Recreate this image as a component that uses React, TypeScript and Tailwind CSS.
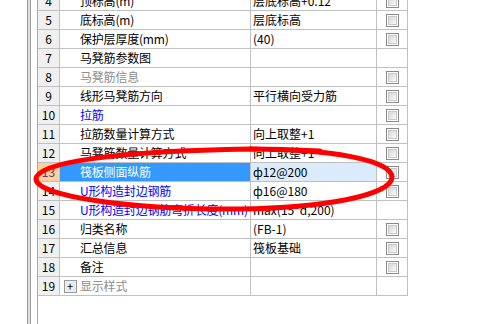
import React from 'react'

type Row = {
  no: number
  name: string
  value?: string
  check?: boolean
  tone?: 'normal' | 'blue' | 'gray'
  selected?: boolean
  expander?: boolean
}

const rows: Row[] = [
  { no: 4, name: '顶标高(m)', value: '层底标高+0.12', check: true },
  { no: 5, name: '底标高(m)', value: '层底标高', check: true },
  { no: 6, name: '保护层厚度(mm)', value: '(40)', check: true },
  { no: 7, name: '马凳筋参数图' },
  { no: 8, name: '马凳筋信息', check: true, tone: 'gray' },
  { no: 9, name: '线形马凳筋方向', value: '平行横向受力筋', check: true },
  { no: 10, name: '拉筋', check: true, tone: 'blue' },
  { no: 11, name: '拉筋数量计算方式', value: '向上取整+1', check: true },
  { no: 12, name: '马凳筋数量计算方式', value: '向上取整+1', check: true },
  { no: 13, name: '筏板侧面纵筋', value: 'ф12@200', check: true, tone: 'blue', selected: true },
  { no: 14, name: 'U形构造封边钢筋', value: 'ф16@180', check: true, tone: 'blue' },
  { no: 15, name: 'U形构造封边钢筋弯折长度(mm)', value: 'max(15*d,200)', tone: 'blue' },
  { no: 16, name: '归类名称', value: '(FB-1)', check: true },
  { no: 17, name: '汇总信息', value: '筏板基础', check: true },
  { no: 18, name: '备注', check: true },
  { no: 19, name: '显示样式', tone: 'gray', expander: true },
]

const font = { fontFamily: '"Noto Sans CJK SC", "Liberation Sans", sans-serif' }

const CheckBox = () => (
  <div className="h-[13px] w-[13px] border border-[#8a8a8a] bg-white p-px">
    <div className="h-full w-full border border-[#c8c8c8] bg-gradient-to-br from-[#d6d6dc] to-[#fbfbfb]" />
  </div>
)

const GridRow = ({ row }: { row: Row }) => {
  const nameColor = row.selected
    ? 'text-white'
    : row.tone === 'blue'
      ? 'text-[#0000ff]'
      : row.tone === 'gray'
        ? 'text-[#8c8c8c]'
        : 'text-black'

  return (
    <div className="flex h-[19px] border-b border-[#c0c0c0] text-[12px] leading-none">
      <div
        className={`flex w-[22px] shrink-0 items-center justify-center border-r border-[#c0c0c0] ${
          row.selected ? 'bg-[#fbd29c] text-[#6b2d6b]' : 'bg-[#f0f0f0] text-black'
        }`}
      >
        {row.no}
      </div>
      <div
        className={`flex w-[191px] shrink-0 items-center overflow-hidden border-r border-[#c0c0c0] ${
          row.selected ? 'bg-[#3399ff]' : 'bg-white'
        }`}
      >
        <div className="flex w-[20px] shrink-0 items-center justify-center">
          {row.expander && (
            <div className="flex h-[13px] w-[13px] items-center justify-center border border-[#9a9a9a] bg-[#ececec] text-[11px] leading-none text-black">
              +
            </div>
          )}
        </div>
        <span className={`whitespace-nowrap tracking-[-0.2px] ${nameColor}`}>{row.name}</span>
      </div>
      <div
        className={`flex w-[126px] shrink-0 items-center overflow-hidden border-r border-[#c0c0c0] pl-[2px] ${
          row.selected ? 'bg-[#dcebfb]' : 'bg-white'
        }`}
      >
        <span className="whitespace-nowrap text-black">{row.value}</span>
      </div>
      <div className="flex w-[31px] shrink-0 items-center justify-center border-r border-[#c0c0c0] bg-white">
        {row.check && <CheckBox />}
      </div>
    </div>
  )
}

export default function App() {
  return (
    <div className="relative flex h-[324px] w-[491px] overflow-hidden bg-white" style={font}>
      <div className="w-[27px] shrink-0" />
      <div className="flex w-[4px] shrink-0">
        <div className="w-px bg-[#9c9c9c]" />
        <div className="w-[2px] bg-[#dedede]" />
        <div className="w-px bg-[#9c9c9c]" />
      </div>
      <div className="w-[6px] shrink-0" />
      <div className="w-px shrink-0 bg-[#a8a8a8]" />
      <div className="-mt-[8px] flex w-[370px] shrink-0 flex-col">
        {rows.map((r) => (
          <GridRow key={r.no} row={r} />
        ))}
      </div>

      <svg
        className="pointer-events-none absolute left-0 top-0"
        width="491"
        height="324"
        viewBox="0 0 491 324"
      >
        <path
          d="M 250 149 C 330 149 392 160 392 177 C 392 196 320 208 240 209 C 130 210 36 196 36 179 C 36 162 120 151 250 149 C 280 149 300 150 320 151"
          fill="none"
          stroke="#ff0000"
          strokeWidth="5"
          strokeLinecap="round"
        />
      </svg>
    </div>
  )
}
